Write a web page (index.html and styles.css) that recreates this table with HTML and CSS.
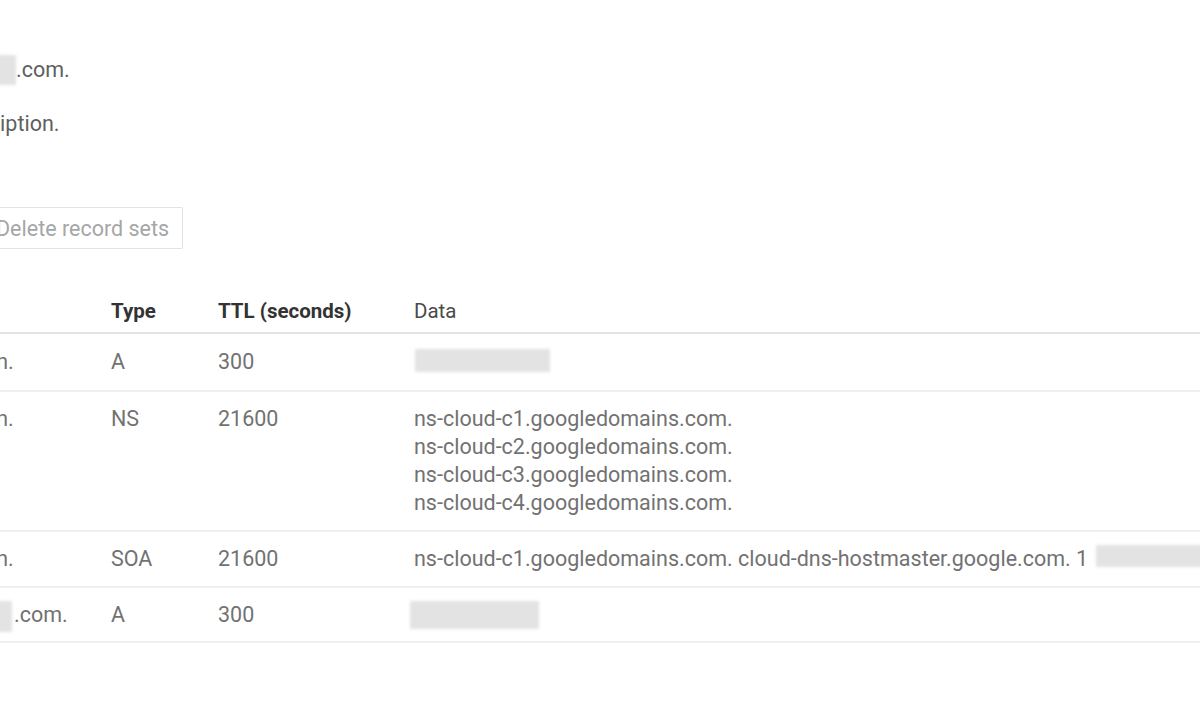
FILE: index.html
```html
<!DOCTYPE html>
<html lang="en">
<head>
<meta charset="utf-8">
<title>Zone details</title>
<link rel="stylesheet" href="styles.css">
</head>
<body>
<div class="page">
  <div class="details">
    <div class="detail-value"><span class="redact redact-zone"></span>.com.</div>
    <div class="detail-value">No description.</div>
  </div>

  <div class="toolbar">
    <button class="btn" disabled>Delete record sets</button>
  </div>

  <table class="records">
    <colgroup>
      <col class="col-name">
      <col class="col-type">
      <col class="col-ttl">
      <col class="col-data">
    </colgroup>
    <thead>
      <tr>
        <th class="th-bold">DNS name</th>
        <th class="th-bold">Type</th>
        <th class="th-bold">TTL (seconds)</th>
        <th class="th-plain">Data</th>
      </tr>
    </thead>
    <tbody>
      <tr class="row-a">
        <td><span class="redact redact-name"></span>.com.</td>
        <td>A</td>
        <td>300</td>
        <td><span class="redact redact-ip"></span></td>
      </tr>
      <tr class="row-ns">
        <td><span class="redact redact-name"></span>.com.</td>
        <td>NS</td>
        <td>21600</td>
        <td>ns-cloud-c1.googledomains.com.<br>ns-cloud-c2.googledomains.com.<br>ns-cloud-c3.googledomains.com.<br>ns-cloud-c4.googledomains.com.</td>
      </tr>
      <tr class="row-soa">
        <td><span class="redact redact-name"></span>.com.</td>
        <td>SOA</td>
        <td>21600</td>
        <td>ns-cloud-c1.googledomains.com. cloud-dns-hostmaster.google.com. 1 <span class="redact redact-soa"></span></td>
      </tr>
      <tr class="row-www">
        <td><span class="redact redact-www"></span>.com.</td>
        <td>A</td>
        <td>300</td>
        <td><span class="redact redact-ip2"></span></td>
      </tr>
    </tbody>
  </table>
</div>
</body>
</html>
```
FILE: styles.css
```css
html, body {
  margin: 0;
  padding: 0;
  background: #ffffff;
  overflow: hidden;
}

body {
  font-family: Roboto, "Liberation Sans", Arial, sans-serif;
  color: #666666;
  width: 1200px;
  height: 720px;
}

.page {
  margin-left: -140px;
  width: 1340px;
  padding-top: 56px;
}

.details {
  display: flex;
  flex-direction: column;
  gap: 26px;
  padding-left: 54px;
}

.detail-value {
  font-size: 21.5px;
  line-height: 28px;
  height: 28px;
  color: #5f5f5f;
  white-space: nowrap;
}

.redact {
  display: inline-block;
  background: #e3e3e3;
  filter: blur(1.6px);
  vertical-align: top;
}

.redact-zone {
  width: 102px;
  height: 30px;
  margin-top: -1px;
  margin-bottom: -1px;
}

.toolbar {
  margin-top: 69px;
  padding-left: 121px;
}

.btn {
  font-family: Roboto, "Liberation Sans", Arial, sans-serif;
  font-size: 21.5px;
  line-height: 28px;
  height: 42px;
  padding: 1px 13px 0 14px;
  border: 1px solid #e3e3e3;
  border-radius: 2px;
  background: #ffffff;
  color: #a6a6a6;
}

.records {
  margin-top: 47px;
  width: 1340px;
  border-collapse: collapse;
  table-layout: fixed;
}

.col-name { width: 251px; }
.col-type { width: 107px; }
.col-ttl  { width: 196px; }

.records th {
  text-align: left;
  padding: 1px 0 7px 0;
  font-size: 20.5px;
  line-height: 28px;
  border-bottom: 2px solid #e4e4e4;
  white-space: nowrap;
}

.th-bold {
  font-weight: 700;
  color: #333333;
}

.th-plain {
  font-weight: 400;
  font-size: 19.5px;
  color: #4a4a4a;
}

.records td {
  padding: 13px 0 13px 0;
  font-size: 21.5px;
  line-height: 28px;
  vertical-align: top;
  border-bottom: 2px solid #efefef;
  color: #727272;
  white-space: nowrap;
}

.row-a td { padding-top: 14px; padding-bottom: 14px; }
.row-ns td { padding-bottom: 13px; }
.row-soa td { padding-bottom: 13px; }
.row-www td { padding-bottom: 12px; }

.redact-name {
  width: 100px;
  height: 28px;
}

.redact-www {
  width: 152px;
  height: 31px;
  margin-top: 0;
  margin-bottom: -3px;
  margin-right: 2px;
}

.redact-ip {
  width: 135px;
  height: 23px;
  margin-left: 1px;
  margin-top: 1px;
  margin-bottom: 4px;
}

.redact-ip2 {
  width: 129px;
  height: 28px;
  margin-left: -4px;
  margin-top: 0;
}

.redact-soa {
  width: 130px;
  height: 22px;
  margin-left: 2px;
  margin-top: 0;
  margin-bottom: 6px;
}
```
